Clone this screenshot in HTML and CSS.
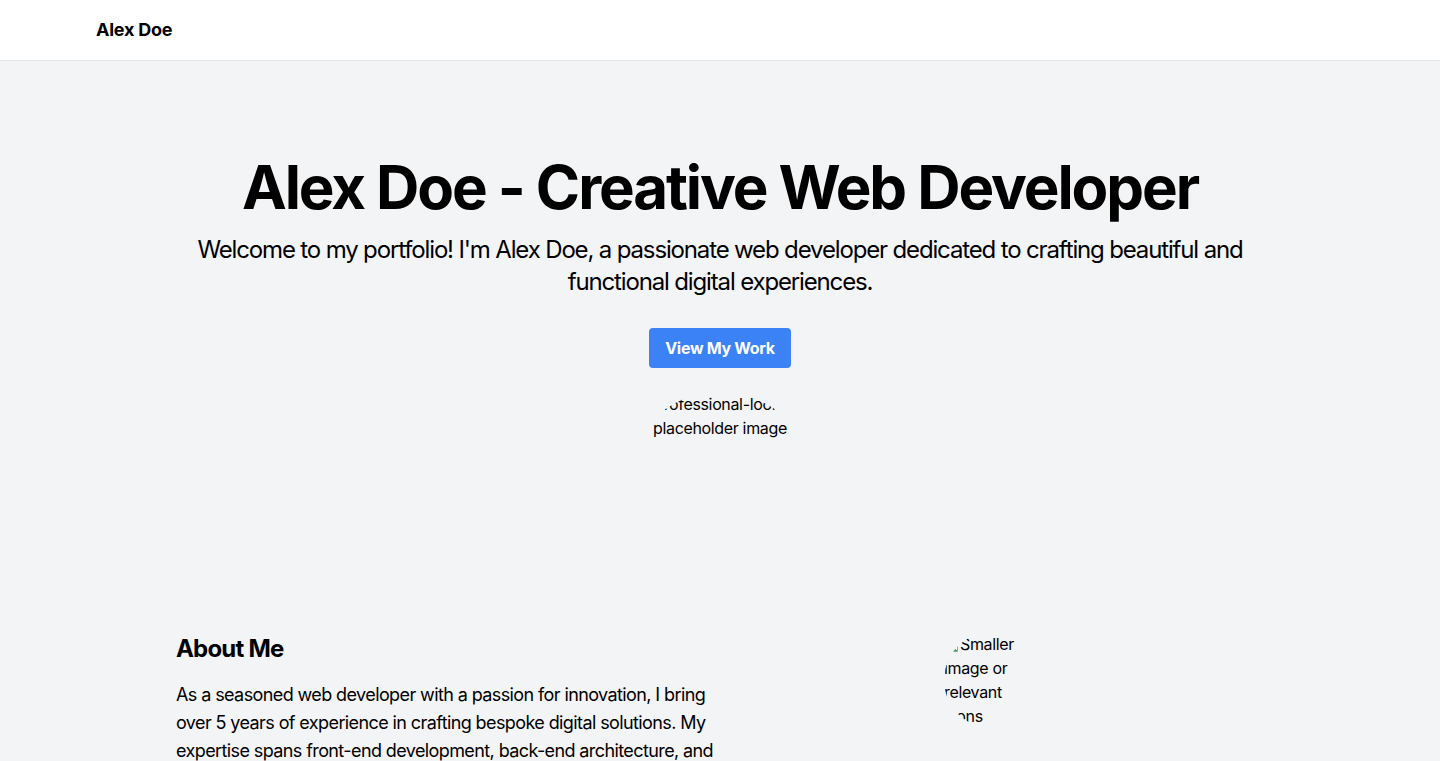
FILE: index.html
```html
<!DOCTYPE html>
<html lang="en">
<head>
<meta charset="utf-8">
<title>Alex Doe - Creative Web Developer</title>
<link rel="stylesheet" href="styles.css">
</head>
<body>
<header class="site-header">
  <div class="header-inner">
    <span class="brand">Alex Doe</span>
  </div>
</header>
<main>
  <section class="hero">
    <div class="container">
      <h1 class="hero-title">Alex Doe - Creative Web Developer</h1>
      <p class="hero-lead">Welcome to my portfolio! I'm Alex Doe, a passionate web developer dedicated to crafting beautiful and functional digital experiences.</p>
      <a class="btn" href="#work">View My Work</a>
      <div class="avatar avatar-lg" role="img" aria-label="Professional-looking placeholder image">
        <span class="alt-text"><svg class="broken" width="16" height="16" viewBox="0 0 16 16" aria-hidden="true"><path d="M2.5 1.5h7l4 4v9h-11z" fill="#fff" stroke="#9aa0a6"/><path d="M3 14l3.5-4 2.5 2.5 1.5-1.5 3 3z" fill="#34a853"/><circle cx="11" cy="8" r="1.2" fill="#4285f4"/></svg>Professional-looking placeholder image</span>
      </div>
    </div>
  </section>
  <section class="about" id="work">
    <div class="container about-row">
      <div class="about-text">
        <h2 class="about-title">About Me</h2>
        <p class="about-body">As a seasoned web developer with a passion for innovation, I bring over 5 years of experience in crafting bespoke digital solutions. My expertise spans front-end development, back-end architecture, and user experience design, allowing me to deliver polished products from concept to launch.</p>
      </div>
      <div class="about-media">
        <div class="avatar avatar-sm" role="img" aria-label="Smaller image or relevant icons">
          <span class="alt-text"><svg class="broken" width="16" height="16" viewBox="0 0 16 16" aria-hidden="true"><path d="M2.5 1.5h7l4 4v9h-11z" fill="#fff" stroke="#9aa0a6"/><path d="M3 14l3.5-4 2.5 2.5 1.5-1.5 3 3z" fill="#34a853"/><circle cx="11" cy="8" r="1.2" fill="#4285f4"/></svg>Smaller image or relevant icons</span>
        </div>
      </div>
    </div>
  </section>
</main>
</body>
</html>
```

FILE: styles.css
```css
* { box-sizing: border-box; }
html, body { margin: 0; padding: 0; }
body {
  font-family: Inter, "Noto Sans", "Liberation Sans", sans-serif;
  color: #000;
  background: #f3f4f6;
  font-size: 16px;
  line-height: 24px;
}
.site-header {
  background: #fff;
  border-bottom: 1px solid #e5e7eb;
}
.header-inner {
  max-width: 1280px;
  margin: 0 auto;
  padding: 16px 16px;
}
.brand {
  display: block;
  font-size: 18px;
  line-height: 28px;
  font-weight: 700;
  letter-spacing: -0.25px;
}
.container {
  max-width: 1152px;
  margin: 0 auto;
  padding: 0 32px;
}
.hero {
  padding-top: 96px;
  text-align: center;
}
.hero-title {
  margin: 0 0 17px;
  font-size: 60px;
  line-height: 60px;
  font-weight: 700;
  letter-spacing: -2.1px;
}
.hero-lead {
  margin: 0 0 30px;
  font-size: 24px;
  line-height: 32px;
  letter-spacing: -1.15px;
}
.btn {
  display: inline-block;
  background: #3b82f6;
  color: #fff;
  font-weight: 700;
  text-decoration: none;
  padding: 8px 16px;
  border-radius: 4px;
  font-size: 16px;
  line-height: 24px;
  letter-spacing: -0.3px;
}
.avatar {
  overflow: hidden;
  border-radius: 50%;
  margin: 0 auto;
  letter-spacing: -0.35px;
}
.avatar-lg {
  width: 192px;
  height: 192px;
  margin-top: 24px;
}
.avatar-sm {
  width: 96px;
  height: 96px;
}
.alt-text { display: block; }
.broken { vertical-align: baseline; margin-bottom: -3px; }
.about {
  padding-top: 48px;
}
.about-row {
  display: flex;
  align-items: flex-start;
}
.about-text { width: 50%; }
.about-media { width: 50%; }
.about-title {
  margin: 1px 0 16px;
  font-size: 24px;
  line-height: 32px;
  font-weight: 700;
  letter-spacing: -0.8px;
}
.about-body {
  margin: 0;
  font-size: 18px;
  line-height: 28px;
  letter-spacing: -0.6px;
}
```
